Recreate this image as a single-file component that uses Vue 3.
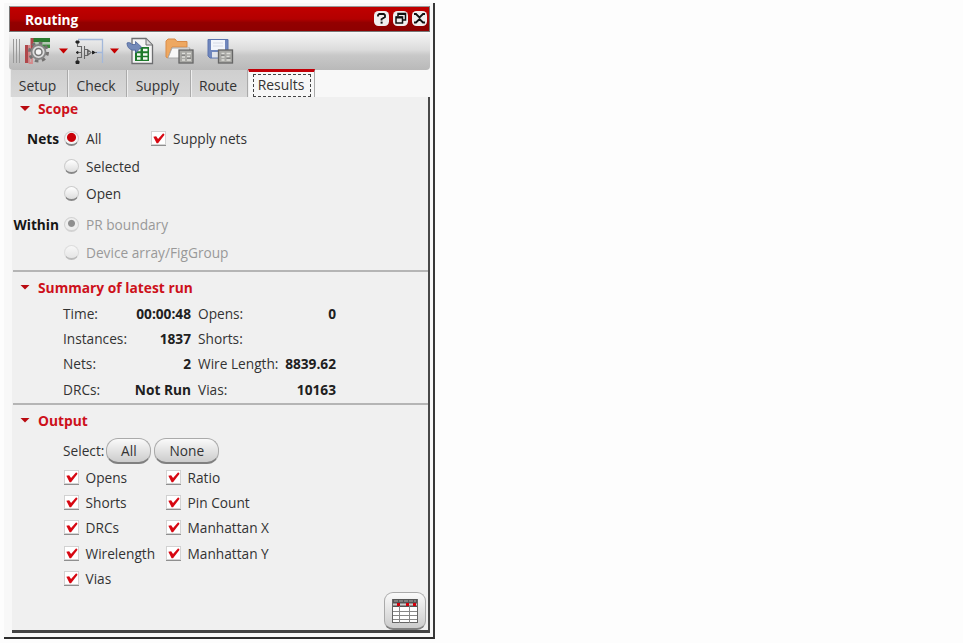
<script setup>
const tabs = ['Setup', 'Check', 'Supply', 'Route']
const stats = [
  ['Time:', '00:00:48', 'Opens:', '0'],
  ['Instances:', '1837', 'Shorts:', ''],
  ['Nets:', '2', 'Wire Length:', '8839.62'],
  ['DRCs:', 'Not Run', 'Vias:', '10163'],
]
const outputs = [
  ['Opens', 'Ratio'],
  ['Shorts', 'Pin Count'],
  ['DRCs', 'Manhattan X'],
  ['Wirelength', 'Manhattan Y'],
  ['Vias'],
]
</script>

<template>
  <div class="screen">
    <div class="window">
      <header class="title">
        <span class="title-text">Routing</span>
        <svg class="wbtn" viewBox="0 0 15 15"><rect width="15" height="15" rx="4.5" fill="#f1eeee" /><path d="M4 5.500V4.200L5.200 3H9.800L11 4.200V6L7.500 8.200V9.500" fill="none" stroke="#111" stroke-width="1.800" /><rect x="6.600" y="10.600" width="2" height="2" fill="#111" /></svg>
        <svg class="wbtn" viewBox="0 0 15 15"><rect width="15" height="15" rx="4.500" fill="#f1eeee" /><path d="M5 5V2.500H12.500V9H10" fill="none" stroke="#111" stroke-width="1.500" /><path d="M5 3H12.500" stroke="#111" stroke-width="2" /><rect x="3" y="6" width="6.500" height="6" fill="none" stroke="#111" stroke-width="1.500" /><path d="M3 6.500H9.500" stroke="#111" stroke-width="2" /></svg>
        <svg class="wbtn" viewBox="0 0 15 15"><rect width="15" height="15" rx="4.500" fill="#f1eeee" /><path d="M2 3H4L7.500 6.500L11 3H13M2 11.500H4L7.500 8L11 11.500H13M7 7.200H8" fill="none" stroke="#111" stroke-width="1.800" /></svg>
      </header>

      <div class="toolbar">
        <div class="grip"><i></i><i></i><i></i></div>
        <svg class="ic route" width="28" height="28" viewBox="0 0 28 28">
          <path d="M7 1H26V5H7Z" fill="#2c7c30" /><path d="M8 5H26V7.500H8Z" fill="#b3c8b3" /><path d="M16 7.500H26V11H18Z" fill="#3b8a3e" />
          <path d="M6.500 1H9.500V13H6.500ZM1 8H4.500V26H1Z" fill="#b0474b" /><path d="M5.500 8V26H8V20" fill="none" stroke="#d58a8c" stroke-width="1.800" />
          <circle cx="14.500" cy="15" r="9" fill="none" stroke="#737170" stroke-width="3" stroke-dasharray="3.500 3.570" />
          <circle cx="14.500" cy="15" r="7" fill="#dcdcdc" stroke="#858585" stroke-width="1.800" />
          <circle cx="14.500" cy="15" r="3.500" fill="#f6f6f6" stroke="#777" stroke-width="1.500" />
        </svg>
        <svg class="arrow" width="9" height="6" viewBox="0 0 9 6"><path d="M0 .5H9L4.500 5.500Z" fill="#c50000" /></svg>
        <svg class="ic net" width="29" height="28" viewBox="0 0 29 28">
          <path d="M3 2.500H27.500V26M27 15.500H20" fill="none" stroke="#a3b8da" stroke-width="1.300" />
          <path d="M2.500 5V9.500H6.500V12M2.500 24V20.500H6.500V18M2 15.500H6M6.500 10V21M9.500 9V22M10 12.500H12.500V18.500H10M13 13L16 15.500L13 18M13 13V18M17 15.500H22" fill="none" stroke="#666" stroke-width="1.100" />
          <path d="M1 4H4V6H1ZM1 24H4V26.500H1ZM1 15.500L3 14.500V16.500ZM17.500 14L20 15.500L17.500 17Z" fill="#222" stroke="#222" />
        </svg>
        <svg class="arrow" width="9" height="6" viewBox="0 0 9 6"><path d="M0 .5H9L4.500 5.500Z" fill="#c50000" /></svg>
        <svg class="ic sheet" width="28" height="28" viewBox="0 0 28 28">
          <path d="M6 1.500H20L26.500 8V26.500H6Z" fill="#f4f4f4" stroke="#6d6e70" stroke-width="1.300" /><path d="M20 2V8H26" fill="#ddd" stroke="#6d6e70" />
          <rect x="9" y="10" width="14" height="14" fill="#1d7a2a" /><path d="M11 13H14.500M17 13H21.500M11 17.500H14.500M17 17.500H21.500M11 21.500H14.500M17 21.500H21.500" stroke="#f4f9f3" stroke-width="2.300" />
          <path d="M1 6C3 5 5 6 6 7.500H9.500V4.500L15.500 10L9.500 16V13C5 14 1 11 1 6Z" fill="#7389b8" stroke="#4c659a" stroke-width=".8" />
        </svg>
        <svg class="ic folder" width="29" height="26" viewBox="0 0 29 26">
          <path d="M1 19V3L3 1H10L12 3.500H22V9H7L3 20Z" fill="#eea861" stroke="#d98b48" /><path d="M3 20L7 10H25L22 20Z" fill="#f8f8f8" stroke="#aaa" />
          <rect x="14" y="12" width="14" height="13" fill="#a9a9a5" stroke="#666" stroke-width="1.300" /><path d="M17 15.500H20M22 15.500H26M17 19H20M22 18.500H25M17 22H20M22 22H26" stroke="#dededa" stroke-width="1.300" /><path d="M16.500 17.200H20M22 20.200H26" stroke="#777" />
        </svg>
        <svg class="ic save" width="27" height="26" viewBox="0 0 27 26">
          <path d="M1 1.500H21V20H3L1 18Z" fill="#7087bd" stroke="#5d75ae" /><rect x="4" y="2" width="14" height="10" fill="#f3f5fb" /><path d="M6 5H16M6 8H16" stroke="#d6dae5" /><rect x="5" y="14" width="7" height="5.500" fill="#e1e4ea" />
          <rect x="11.500" y="12" width="14" height="13" fill="#a9a9a5" stroke="#666" stroke-width="1.300" /><path d="M14.500 15.500H17.500M19.500 15.500H23.500M14.500 19H17.500M19.500 18.500H22.500M14.500 22H17.500M19.500 22H23.500" stroke="#dededa" stroke-width="1.300" /><path d="M14 17.200H17.500M19.500 20.200H23.500" stroke="#777" />
        </svg>
      </div>

      <nav class="tabs">
        <div v-for="t in tabs" :key="t" class="tab" :class="t.toLowerCase()">{{ t }}</div>
        <div class="tab active"><span>Results</span></div>
      </nav>

      <main class="panel">
        <section class="scope">
          <h2><i class="tri"></i>Scope</h2>
          <div class="row first"><b>Nets</b><i class="radio on"></i><span class="all">All</span>
            <svg class="check" viewBox="0 0 16 16"><rect x=".5" y=".5" width="15" height="15" fill="#fff" stroke="#d0d0d0" /><path d="M1 14.500H15" stroke="#ccc" /><path d="M0 15.500H16" stroke="#888" /><path d="M2.500 6L5.500 5.500L7.500 8.500L13 2.500L14.500 4L7.500 13H6Z" fill="#d70812" /></svg><span>Supply nets</span></div>
          <div class="row"><b></b><i class="radio"></i><span>Selected</span></div>
          <div class="row"><b></b><i class="radio"></i><span>Open</span></div>
          <div class="row off within"><b>Within</b><i class="radio on"></i><span>PR boundary</span></div>
          <div class="row off"><b></b><i class="radio"></i><span>Device array/FigGroup</span></div>
        </section>
        <section class="summary">
          <h2><i class="tri"></i>Summary of latest run</h2>
          <div v-for="s in stats" :key="s[0]" class="stat"><span>{{ s[0] }}</span><b>{{ s[1] }}</b><span>{{ s[2] }}</span><b>{{ s[3] }}</b></div>
        </section>
        <section class="output">
          <h2><i class="tri"></i>Output</h2>
          <div class="select"><span>Select:</span><button class="ball">All</button><button class="bnone">None</button></div>
          <div v-for="r in outputs" :key="r[0]" class="orow">
            <label v-for="o in r" :key="o"><svg class="check" viewBox="0 0 16 16"><rect x=".5" y=".5" width="15" height="15" fill="#fff" stroke="#d0d0d0" /><path d="M1 14.500H15" stroke="#ccc" /><path d="M0 15.500H16" stroke="#888" /><path d="M2.500 6L5.500 5.500L7.500 8.500L13 2.500L14.500 4L7.500 13H6Z" fill="#d70812" /></svg><span>{{ o }}</span></label>
          </div>
        </section>
        <button class="table">
          <svg width="26" height="26" viewBox="0 0 26 26"><rect x=".5" y="1.500" width="25" height="23" fill="#fff" stroke="#666" /><rect x="1" y="1" width="24" height="8" fill="#555" /><path d="M2 3H24" stroke="#aaa" stroke-dasharray="4 1" /><path d="M1 6.500H25" stroke="#ccc" stroke-width="2" /><path d="M5 6.500H8M14 6.500H17M21 6.500H24" stroke="#d4000c" stroke-width="3" /><path d="M1 13.500H25M1 17.500H25M1 21.500H25M7.500 8V25M17.500 8V25" stroke="#888" /></svg>
        </button>
      </main>
    </div>
  </div>
</template>

<style>
body { margin: 0; background: #fdfdfd; }
</style>
<style scoped>
* { box-sizing: border-box; }
.screen { width: 963px; height: 643px; padding: 3px 0 0 4px; background: #fdfdfd; overflow: hidden; font: 13.700px "Open Sans", sans-serif; color: #333; }
.window { width: 431px; height: 636px; padding: 3px 2px 0 5px; border-right: 2px solid #383838; border-bottom: 2px solid #2e2e2e; background: #f8f8f8; }
.title { width: 421px; height: 26px; display: flex; align-items: center; padding: 0 2px 0 15px; gap: 4px; border: 1px solid #777; border-top-color: #999; background: linear-gradient(#c00000, #b30000 50%, #930000 65%, #8e0000); }
.title-text { flex: 1; color: #fff; font-weight: 700; }
.wbtn { width: 15px; height: 15px; margin-top: -2px; }
.toolbar { width: 421px; height: 37px; margin-top: 1px; display: flex; align-items: center; padding: 0 0 1px 4px; border-radius: 0 0 4px 4px; background: linear-gradient(#f4f4f4, #dcdcdc 45%, #c8c8c8 60%, #b9b9b9); }
.grip { width: 8px; height: 24px; display: flex; gap: 2px; }
.grip i { width: 1px; background: #999; }
.route { margin-left: 3px; }
.arrow { margin-left: 7px; }
.net { margin-left: 7px; }
.net + .arrow { margin-left: 6px; }
.sheet { margin-left: 7px; }
.folder { margin-left: 11px; }
.save { margin-left: 13px; }
.tabs { height: 27px; display: flex; padding-left: 1px; align-items: stretch; }
.tab { display: flex; align-items: center; justify-content: center; padding: 4px 3px 0 0; border-right: 1px solid #aaa; border-left: 1px solid #eee; background: linear-gradient(#cfcfcf, #d8d8d8); font-size: 13.900px; }
.setup { width: 58px; }
.tab.check { width: 59px; }
.supply { width: 64px; }
.route.tab { width: 57px; margin: 0; }
.tab.active { width: 67px; height: 28px; margin-top: -1px; border-top: 3px solid #c20008; padding: 1px 3px 0 4px; background: #f7f7f7; }
.active span { width: 58px; height: 23px; border: 1px dashed #444; display: flex; align-items: center; justify-content: center; padding: 0 2px 1px 0; }
.panel { position: relative; width: 418px; height: 536px; margin-left: 3px; border-right: 2px solid #484848; border-bottom: 3px solid #444; background: #f0f0f0; }
section { border-bottom: 2px solid #b5b5b5; margin-left: 1px; }
.scope { height: 175px; }
.summary { height: 133px; padding-top: 3px; }
.output { border: 0; padding-top: 3px; }
h2 { display: flex; align-items: center; height: 24px; margin: 0; padding-left: 7px; font-size: 13.800px; color: #cd111b; }
.scope h2 { height: 23px; }
.tri { width: 10px; height: 5px; margin-right: 8px; background: #b90a10; clip-path: polygon(0 0, 100% 0, 50% 100%); }
.row { display: flex; align-items: center; height: 27.400px; }
.row.first { margin-top: 5px; }
.within { margin-top: 4px; }
.row b { width: 46px; color: #161616; margin-right: 5px; white-space: nowrap; display: flex; justify-content: flex-end; }
.radio { width: 15px; height: 15px; margin-right: 7px; border-radius: 50%; border: 1px solid #ccc; border-bottom: 2px solid #888; background: linear-gradient(#fff, #ddd); }
.radio.on { background: radial-gradient(circle at 50% 45%, #c90008 0 4px, #f4f4f4 5px); }
.off { color: #999; }
.off .radio { opacity: .5; }
.off .radio.on { opacity: .8; background: radial-gradient(circle at 50% 45%, #777 0 3px, #eee 4px); border-color: #ccc; }
.all { width: 65px; }
svg.check { width: 15px; height: 15px; margin-right: 7px; flex: none; }
.stat { display: grid; grid-template-columns: 50px 79px 90px 55px; align-items: center; height: 25.200px; padding-left: 50px; white-space: nowrap; }
h2 + .stat { margin-top: 2px; }
.stat b { text-align: right; color: #202020; }
.stat b:last-child { padding-right: 1px; }
.stat span:nth-child(3) { padding-left: 6px; }
.stat b:nth-child(2) { padding-right: 1px; }
.select { display: flex; align-items: center; height: 27px; margin-top: 5px; padding-left: 50px; }
button { font: inherit; color: #333; padding: 0; border: 1px solid #aaa; border-bottom: 2px solid #808080; background: linear-gradient(#fafafa, #e3e3e3 50%, #ccc); }
.ball { width: 45px; height: 26px; border-radius: 12px; margin-left: 2px; }
.bnone { width: 65px; height: 26px; border-radius: 12px; margin-left: 3px; }
.orow { display: grid; grid-template-columns: 102px 120px; height: 25.200px; padding-left: 50.500px; }
.select + .orow { margin-top: 1px; }
label { display: flex; align-items: center; white-space: nowrap; }
.table { position: absolute; right: 2px; bottom: 0; width: 42px; height: 38px; border-radius: 9px; display: flex; align-items: center; justify-content: center; }
</style>
